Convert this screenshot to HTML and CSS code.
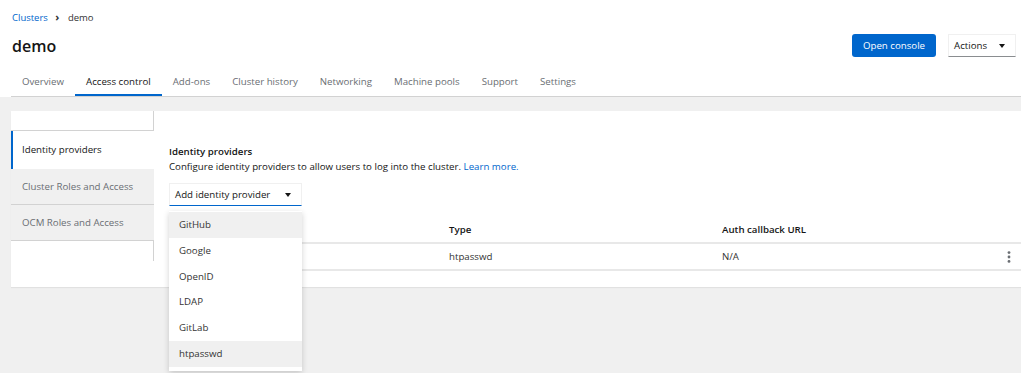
FILE: index.html
```html
<!DOCTYPE html>
<html lang="en">
<head>
    <meta charset="UTF-8">
    <meta name="viewport" content="width=device-width, initial-scale=1.0">
    <title>demo - Clusters</title>
    <link rel="stylesheet" href="styles.css">
</head>
<body>
    <header class="page-header">
        <nav class="breadcrumb">
            <a href="#" class="link">Clusters</a>
            <span class="crumb-sep">&#x203A;</span>
            <span>demo</span>
        </nav>

        <div class="title-row">
            <h1>demo</h1>
            <div class="title-actions">
                <button class="btn-primary">Open console</button>
                <button class="toggle">Actions <span class="caret"></span></button>
            </div>
        </div>

        <ul class="tabs">
            <li>Overview</li>
            <li class="active">Access control</li>
            <li>Add-ons</li>
            <li>Cluster history</li>
            <li>Networking</li>
            <li>Machine pools</li>
            <li>Support</li>
            <li>Settings</li>
        </ul>
    </header>

    <main class="page-body">
        <section class="card">
            <ul class="side-nav">
                <li class="spacer top"></li>
                <li class="active">Identity providers</li>
                <li>Cluster Roles and Access</li>
                <li>OCM Roles and Access</li>
                <li class="spacer bottom"></li>
            </ul>

            <div class="content">
                <h2>Identity providers</h2>
                <p class="desc">Configure identity providers to allow users to log into the cluster. <a href="#" class="link">Learn more.</a></p>

                <div class="select-wrap">
                    <button class="select-toggle">Add identity provider <span class="caret"></span></button>
                    <ul class="menu">
                        <li class="hover">GitHub</li>
                        <li>Google</li>
                        <li>OpenID</li>
                        <li>LDAP</li>
                        <li>GitLab</li>
                        <li class="hover">htpasswd</li>
                    </ul>
                </div>

                <!-- name column sits under the open menu -->
                <table class="idp-table">
                    <thead>
                        <tr>
                            <th class="col-name"></th>
                            <th class="col-type">Type</th>
                            <th>Auth callback URL</th>
                            <th class="col-kebab"></th>
                        </tr>
                    </thead>
                    <tbody>
                        <tr>
                            <td></td>
                            <td>htpasswd</td>
                            <td>N/A</td>
                            <td class="col-kebab">
                                <svg width="4" height="12" viewBox="0 0 4 12"><circle cx="2" cy="1.6" r="1.4" fill="#6a6e73"/><circle cx="2" cy="6" r="1.4" fill="#6a6e73"/><circle cx="2" cy="10.4" r="1.4" fill="#6a6e73"/></svg>
                            </td>
                        </tr>
                    </tbody>
                </table>
            </div>
        </section>
    </main>
</body>
</html>
```

FILE: styles.css
```css
* {
    box-sizing: border-box;
}
body {
    margin: 0;
    font-family: "Open Sans", "Noto Sans", sans-serif;
    font-size: 9.7px;
    color: #151515;
    background-color: #f0f0f0;
    height: 373px;
    overflow: hidden;
}
.link {
    color: #0066cc;
    text-decoration: none;
}
.page-header {
    background-color: #fff;
    padding: 10px 0 0 11px;
}
.breadcrumb {
    height: 14px;
    line-height: 14px;
    padding-left: 1px;
    font-size: 9.5px;
    color: #333;
}
.crumb-sep {
    display: inline-block;
    margin: 0 6px 0 5px;
    font-weight: 700;
    font-size: 11px;
}
.title-row {
    display: flex;
    align-items: center;
    justify-content: space-between;
    margin-top: 10px;
    height: 23px;
}
h1 {
    margin: 0;
    padding-left: 1px;
    font-size: 16px;
    font-weight: 600;
}
.title-actions {
    display: flex;
    gap: 12px;
    margin-right: 5px;
}
button {
    font-family: inherit;
    font-size: 9.7px;
}
.btn-primary {
    width: 84px;
    height: 23px;
    border: none;
    border-radius: 3px;
    background-color: #0066cc;
    color: #fff;
}
.toggle {
    width: 68px;
    height: 23px;
    background: #fff;
    color: #151515;
    border: 1px solid #f0f0f0;
    border-bottom-color: #8a8d90;
    display: flex;
    align-items: center;
    justify-content: space-between;
    padding: 0 10px 0 5px;
}
.caret {
    display: inline-block;
    width: 0;
    height: 0;
    border-left: 3.5px solid transparent;
    border-right: 3.5px solid transparent;
    border-top: 4px solid #151515;
}
.tabs {
    list-style: none;
    margin: 14px 0 0;
    padding: 0;
    display: flex;
    border-bottom: 1px solid #d2d2d2;
}
.tabs li {
    padding: 0 11px;
    height: 25px;
    line-height: 22px;
    color: #6a6e73;
}
.tabs li.active {
    color: #151515;
    border-bottom: 2px solid #0066cc;
    margin-bottom: -1px;
}
.page-body {
    padding: 14px 0 0 11px;
}
.card {
    background: #fff;
    display: flex;
    height: 176px;
    box-shadow: 0 1px 1px rgba(0, 0, 0, 0.06);
}
.side-nav {
    list-style: none;
    margin: 0;
    padding: 0;
    width: 143px;
    flex-shrink: 0;
}
.side-nav li {
    height: 36px;
    line-height: 35px;
    padding-left: 11px;
    color: #6a6e73;
    background: #f0f0f0;
    border-bottom: 1px solid #d2d2d2;
}
.side-nav li.active {
    background: #fff;
    color: #151515;
    border-left: 2px solid #0066cc;
    border-bottom: none;
    padding-left: 9px;
    height: 38px;
    line-height: 38px;
}
.side-nav li.spacer {
    background: #fff;
    height: 20px;
    border-right: 1px solid #d2d2d2;
}
.side-nav li.spacer.bottom {
    border-bottom: none;
}
.content {
    flex: 1;
    padding: 34px 0 0 15px;
    position: relative;
}
h2 {
    margin: 0;
    font-size: 9.7px;
    font-weight: 600;
    line-height: 13px;
}
.desc {
    margin: 2px 0 0;
    line-height: 13px;
}
.select-wrap {
    position: relative;
    width: 133px;
    margin-top: 10px;
}
.select-toggle {
    width: 133px;
    height: 23px;
    background: #fff;
    border: 1px solid #f0f0f0;
    border-bottom: 1px solid #0066cc;
    color: #151515;
    display: flex;
    align-items: center;
    justify-content: space-between;
    padding: 0 10px 0 5px;
}
.menu {
    position: absolute;
    top: 28px;
    left: 0;
    width: 133px;
    margin: 0;
    padding: 1px 0 4px;
    list-style: none;
    background: #fff;
    box-shadow: 0 2px 6px rgba(0, 0, 0, 0.18);
    z-index: 2;
}
.menu li {
    height: 25.8px;
    line-height: 25.8px;
    padding-left: 10px;
    color: #333;
}
.menu li.hover {
    background: #f0f0f0;
}
.idp-table {
    border-collapse: collapse;
    width: 100%;
    margin-top: 10px;
}
.idp-table th {
    text-align: left;
    font-weight: 600;
    height: 27px;
    padding: 0 0 0 10px;
    vertical-align: middle;
}
.idp-table td {
    height: 27px;
    padding: 0 0 0 10px;
    color: #333;
    border-top: 2px solid #e8e8e8;
    border-bottom: 2px solid #e8e8e8;
}
.col-name {
    width: 270px;
}
.col-type {
    width: 273px;
}
.col-kebab {
    width: 14px;
}
.idp-table td.col-kebab {
    padding: 3px 0 0 0;
}
```
